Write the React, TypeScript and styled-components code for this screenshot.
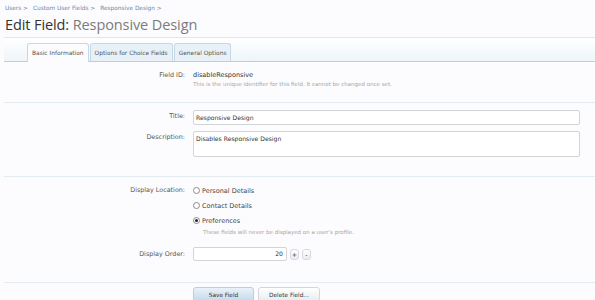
import React from "react";
import styled, { createGlobalStyle } from "styled-components";

const Global = createGlobalStyle`
  html, body { margin: 0; padding: 0; background: #fcfcfe; }
  body { font-family: "DejaVu Sans", Verdana, sans-serif; font-size: 6.5px; color: #333; }
  * { box-sizing: border-box; }
`;

const Page = styled.div`
  width: 595px;
  height: 300px;
  overflow: hidden;
  padding-top: 3px;
`;

const Breadcrumb = styled.div`
  display: flex;
  gap: 5px;
  padding-left: 5px;
  height: 9px;
  align-items: center;
  color: #6a87a6;
  font-size: 5.8px;
`;

const Crumb = styled.span``;

const Heading = styled.h1`
  margin: 3px 0 0 5px;
  height: 22px;
  font-family: "Open Sans", sans-serif;
  font-weight: 400;
  font-size: 14.5px;
  line-height: 20px;
  color: #333;
  letter-spacing: -0.1px;
`;

const HeadingSub = styled.span`
  color: #7b7b7b;
`;

const TabStrip = styled.div`
  border-top: 1px solid #e3e7ea;
  height: 25px;
  background: linear-gradient(#ffffff, #eef5fa);
  border-bottom: 1px solid #b9d0e2;
  display: flex;
  align-items: flex-end;
  padding-left: 23px;
  gap: 1px;
  margin-left: 4px;
`;

const Tab = styled.div<{ $active?: boolean }>`
  padding: 0 4px;
  display: flex;
  align-items: center;
  font-size: 5.9px;
  color: #555;
  border: 1px solid #c6d8e6;
  border-bottom: none;
  border-radius: 3px 3px 0 0;
  background: ${(p) => (p.$active ? "#fcfcfe" : "#e8f1f8")};
  margin-bottom: ${(p) => (p.$active ? "-1px" : "0")};
  height: ${(p) => (p.$active ? "19px" : "18px")};
`;

const Section = styled.div<{ $h: number }>`
  margin-left: 4px;
  height: ${(p) => p.$h}px;
  border-bottom: 1px solid #e4ecf1;
`;

const Row = styled.div<{ $top?: number }>`
  display: grid;
  grid-template-columns: 181px 1fr;
  column-gap: 8px;
  padding-top: ${(p) => p.$top ?? 0}px;
  padding-right: 15px;
`;

const Label = styled.div<{ $pt?: number }>`
  text-align: right;
  color: #555;
  font-size: 6.4px;
  padding-top: ${(p) => p.$pt ?? 0}px;
  line-height: 9px;
`;

const Value = styled.div`
  font-size: 6.5px;
  color: #333;
  line-height: 9px;
`;

const Hint = styled.div<{ $pl?: number; $pt?: number }>`
  font-size: 5.5px;
  color: #a6a6a6;
  line-height: 8px;
  padding-left: ${(p) => p.$pl ?? 0}px;
  padding-top: ${(p) => p.$pt ?? 0}px;
`;

const TextInput = styled.div<{ $h: number }>`
  height: ${(p) => p.$h}px;
  border: 1px solid #d2d5d8;
  border-radius: 2px;
  background: #fff;
  padding: 3px 2px;
  font-size: 6.1px;
  color: #333;
  line-height: 7px;
`;

const RadioList = styled.div`
  display: flex;
  flex-direction: column;
  gap: 6px;
`;

const RadioRow = styled.div`
  display: flex;
  align-items: center;
  gap: 2px;
  height: 9px;
  font-size: 6.5px;
  color: #444;
`;

const Radio = styled.span<{ $on?: boolean }>`
  width: 7px;
  height: 7px;
  border-radius: 50%;
  border: 1px solid #8a8a8a;
  background: #fff;
  display: inline-flex;
  align-items: center;
  justify-content: center;
  &::after {
    content: "";
    width: 3px;
    height: 3px;
    border-radius: 50%;
    background: ${(p) => (p.$on ? "#222" : "transparent")};
  }
`;

const OrderWrap = styled.div`
  display: flex;
  align-items: center;
  gap: 3px;
`;

const NumberBox = styled.div`
  width: 94px;
  height: 14px;
  border: 1px solid #d2d5d8;
  border-radius: 2px;
  background: #fff;
  text-align: right;
  padding: 0 3px;
  font-size: 6.1px;
  line-height: 12px;
  color: #333;
`;

const Spin = styled.div`
  width: 9px;
  height: 11px;
  border: 1px solid #d6dade;
  border-radius: 3px;
  background: linear-gradient(#fff, #e9ecef);
  font-size: 6.3px;
  text-align: center;
  line-height: 9px;
  color: #333;
`;

const ButtonBar = styled.div`
  display: flex;
  gap: 4px;
  padding-left: 193px;
  padding-top: 4px;
`;

const Button = styled.div<{ $primary?: boolean }>`
  height: 15px;
  width: ${(p) => (p.$primary ? "61px" : "62px")};
  border: 1px solid ${(p) => (p.$primary ? "#b9cfe2" : "#d3d7db")};
  border-radius: 3px;
  background: ${(p) =>
    p.$primary ? "linear-gradient(#eaf2f9, #c4d9ec)" : "linear-gradient(#ffffff, #e8ebee)"};
  font-size: 5.8px;
  color: #333;
  display: flex;
  align-items: center;
  justify-content: center;
`;

export default function App() {
  return (
    <Page>
      <Global />
      <Breadcrumb>
        <Crumb>Users &gt;</Crumb>
        <Crumb>Custom User Fields &gt;</Crumb>
        <Crumb>Responsive Design &gt;</Crumb>
      </Breadcrumb>
      <Heading>
        Edit Field: <HeadingSub>Responsive Design</HeadingSub>
      </Heading>
      <TabStrip>
        <Tab $active>Basic Information</Tab>
        <Tab>Options for Choice Fields</Tab>
        <Tab>General Options</Tab>
      </TabStrip>
      <Section $h={41}>
        <Row $top={9}>
          <Label>Field ID:</Label>
          <div>
            <Value>disableResponsive</Value>
            <Hint>This is the unique identifier for this field. It cannot be changed once set.</Hint>
          </div>
        </Row>
      </Section>
      <Section $h={74}>
        <Row $top={7}>
          <Label $pt={2}>Title:</Label>
          <TextInput $h={15}>Responsive Design</TextInput>
        </Row>
        <Row $top={6}>
          <Label $pt={2}>Description:</Label>
          <TextInput $h={26}>Disables Responsive Design</TextInput>
        </Row>
      </Section>
      <Section $h={106}>
        <Row $top={9}>
          <Label>Display Location:</Label>
          <div>
            <RadioList>
              <RadioRow>
                <Radio />
                Personal Details
              </RadioRow>
              <RadioRow>
                <Radio />
                Contact Details
              </RadioRow>
              <RadioRow>
                <Radio $on />
                Preferences
              </RadioRow>
            </RadioList>
            <Hint $pl={10} $pt={3}>These fields will never be displayed on a user's profile.</Hint>
          </div>
        </Row>
        <Row $top={11}>
          <Label $pt={3}>Display Order:</Label>
          <OrderWrap>
            <NumberBox>20</NumberBox>
            <Spin>+</Spin>
            <Spin>-</Spin>
          </OrderWrap>
        </Row>
      </Section>
      <ButtonBar>
        <Button $primary>Save Field</Button>
        <Button>Delete Field...</Button>
      </ButtonBar>
    </Page>
  );
}
